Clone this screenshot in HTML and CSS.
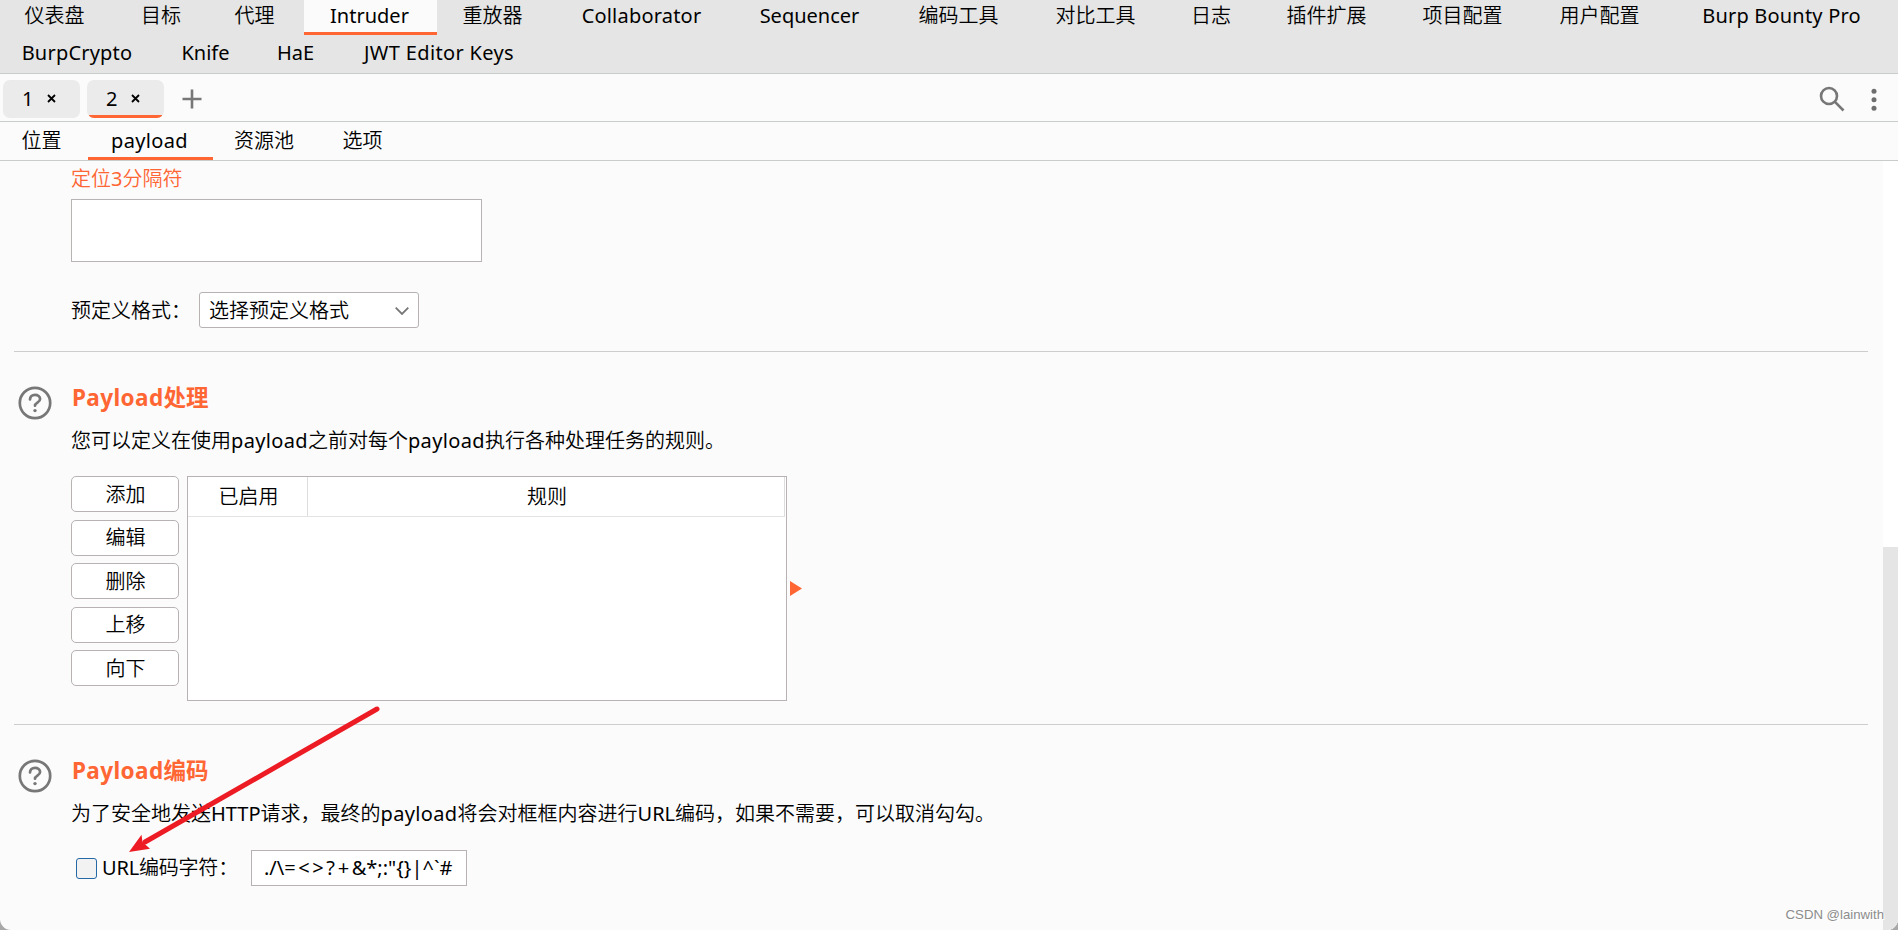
FILE: index.html
```html
<!DOCTYPE html>
<html lang="zh-CN">
<head>
<meta charset="utf-8">
<title>Burp Suite Intruder</title>
<link rel="stylesheet" href="styles.css">
</head>
<body>
<div class="window">
  <header class="tools">
    <nav class="tools-row tools-main">
      <span>仪表盘</span><span>目标</span><span class="before-active">代理</span><span class="active latin">Intruder</span><span>重放器</span><span class="latin spread">Collaborator</span><span class="latin">Sequencer</span><span>编码工具</span><span>对比工具</span><span>日志</span><span>插件扩展</span><span>项目配置</span><span>用户配置</span><span class="latin spread">Burp Bounty Pro</span>
    </nav>
    <nav class="tools-row tools-extra">
      <span class="latin spread">BurpCrypto</span><span class="latin">Knife</span><span class="latin">HaE</span><span class="latin spread-wide">JWT Editor Keys</span>
    </nav>
  </header>

  <div class="attacks">
    <div class="attack"><span class="latin">1</span><svg class="close" viewBox="0 0 9 9"><path d="M1 1l7 7M8 1l-7 7"/></svg></div>
    <div class="attack selected"><span class="latin">2</span><svg class="close" viewBox="0 0 9 9"><path d="M1 1l7 7M8 1l-7 7"/></svg></div>
    <svg class="plus" viewBox="0 0 20 20"><path d="M10 .5v19M.5 10h19"/></svg>
    <svg class="search" viewBox="0 0 26 26"><circle cx="10" cy="10" r="8"/><path d="M15.7 15.7L24.5 24.5"/></svg>
    <svg class="more" viewBox="0 0 6 24"><circle cx="3" cy="3.2" r="2.5"/><circle cx="3" cy="11.7" r="2.5"/><circle cx="3" cy="20.2" r="2.5"/></svg>
  </div>

  <nav class="subtabs">
    <span>位置</span><span class="active latin spread-wide">payload</span><span>资源池</span><span>选项</span>
  </nav>

  <div class="body">
    <main class="content">
      <section class="positions">
        <div class="label-accent">定位<span class="latin">3</span>分隔符</div>
        <div class="textarea"></div>
        <div class="format">
          <span class="format-label">预定义格式：</span>
          <div class="select"><span>选择预定义格式</span><svg viewBox="0 0 14 8"><path d="M.7.7L7 7 13.3.7"/></svg></div>
        </div>
      </section>

      <section class="section processing">
        <svg class="help" viewBox="0 0 34 34"><circle cx="17" cy="17" r="15.2"/><path d="M12 13.500c0-3 2.200-4.700 5-4.700s5.100 1.700 5.100 4.300c0 3.500-5.100 3.500-5.100 6.600"/><circle class="dot" cx="17" cy="24.600" r="1.700"/></svg>
        <div class="section-body">
          <h2><span class="title-latin">Payload</span>处理</h2>
          <p>您可以定义在使用<span class="latin spread-wide">payload</span>之前对每个<span class="latin spread-wide">payload</span>执行各种处理任务的规则。</p>
          <div class="rules">
            <div class="buttons"><button>添加</button><button>编辑</button><button>删除</button><button>上移</button><button>向下</button></div>
            <div class="table"><div class="thead"><span>已启用</span><span>规则</span></div></div>
            <svg class="expand" viewBox="0 0 12 15"><path d="M0 0L12 7.500 0 15z"/></svg>
          </div>
        </div>
      </section>

      <section class="section encoding">
        <svg class="help" viewBox="0 0 34 34"><circle cx="17" cy="17" r="15.2"/><path d="M12 13.500c0-3 2.200-4.700 5-4.700s5.100 1.700 5.100 4.300c0 3.500-5.100 3.500-5.100 6.600"/><circle class="dot" cx="17" cy="24.600" r="1.700"/></svg>
        <div class="section-body">
          <h2><span class="title-latin">Payload</span>编码</h2>
          <p>为了安全地发送<span class="latin">HTTP</span>请求，最终的<span class="latin spread-wide">payload</span>将会对框框内容进行<span class="latin">URL</span>编码，如果不需要，可以取消勾勾。</p>
          <div class="encode">
            <span class="checkbox"></span>
            <span class="encode-label"><span class="latin">URL</span>编码字符：</span>
            <div class="chars latin">./\<span class="spaced">=&lt;&gt;?+</span>&amp;*;:"{}|^`#</div>
          </div>
        </div>
      </section>
    </main>
    <div class="scrollbar"><div class="thumb"></div></div>
  </div>

  <svg class="arrow" viewBox="0 0 260 156"><path class="shaft" d="M252 9L20 142"/><path d="M4 152L16.500 134.800 17.500 142 25 148.800z"/></svg>
  <div class="watermark">CSDN @lainwith</div>
</div>
</body>
</html>
```
FILE: styles.css
```css
* { box-sizing: border-box; }
body {
  margin: 0;
  background: #a8a8a8;
  color: #000;
  font: 350 20px/28px "Noto Sans", "Noto Sans CJK SC", sans-serif;
}
.window {
  position: relative;
  display: flex;
  flex-direction: column;
  width: 1898px;
  height: 930px;
  overflow: hidden;
  background: #fbfbfb;
  border-radius: 0 0 11px 11px;
  white-space: nowrap;
}
.latin { font-weight: 400; }
.spread { letter-spacing: .2px; }
.spread-wide { letter-spacing: .350px; }
.tools { height: 74px; background: #e5e5e5; border-bottom: 1px solid #c8cdcc; }
.tools-row { display: grid; text-align: center; }
.tools-row span { padding-top: 2px; }
.tools-main {
  height: 36px;
  grid-template-columns: 109px 104px 91px 133px 111px 187px 149px 149px 125px 106px 125px 147px 127px 237px;
}
.tools-main .before-active { padding-right: 8px; }
.tools-main .active { height: 35px; padding-right: 2px; background: #fbfbfb; border-bottom: 3px solid #ff6633; }
.tools-extra { grid-template-columns: 154px 103px 77px 210px; padding-top: 1px; }

.attacks {
  display: flex;
  align-items: flex-start;
  height: 48px;
  padding: 6px 21px 0 3px;
  border-bottom: 1px solid #c8cdcc;
}
.attack {
  display: flex;
  align-items: center;
  gap: 14px;
  width: 77px;
  height: 38px;
  margin-right: 7px;
  padding: 0 0 1px 19px;
  border-radius: 7px;
  background: #ebebeb;
  overflow: hidden;
}
.attack.selected { position: relative; }
.attack.selected::after {
  content: "";
  position: absolute;
  left: 2px;
  right: 2px;
  bottom: 0;
  height: 3px;
  border-radius: 0 0 5px 5px;
  background: #ff6633;
}
.close { width: 9px; height: 9px; fill: none; stroke: #000; stroke-width: 1.800; }
.plus { width: 20px; height: 20px; margin: 9px 0 0 11px; fill: none; stroke: #777; stroke-width: 2.600; }
.search { width: 26px; height: 26px; margin: 6px 26px 0 auto; fill: none; stroke: #777; stroke-width: 2.600; }
.more { width: 6px; height: 24px; margin-top: 8px; fill: #6e6e6e; }

.subtabs {
  display: grid;
  grid-template-columns: 88px 125px 102px 95px;
  height: 39px;
  border-bottom: 1px solid #c8cdcc;
  text-align: center;
}
.subtabs span { height: 38px; padding-top: 5px; }
.subtabs span:first-child { padding-right: 5px; }
.subtabs .active { padding-right: 2px; border-bottom: 3px solid #ff6633; }

.body { display: flex; flex: 1; min-height: 0; }
.content { width: 1883px; padding: 0 15px 0 14px; }
.positions { height: 190px; padding: 3px 0 0 57px; }
.label-accent { color: #ff6633; line-height: 30px; }
.textarea { width: 411px; height: 63px; margin-top: 5px; background: #fff; border: 1px solid #b8b4b4; }
.format { display: flex; align-items: center; height: 36px; margin-top: 30px; }
.format-label { width: 128px; padding-top: 1px; }
.select {
  display: flex;
  align-items: center;
  justify-content: space-between;
  width: 220px;
  height: 36px;
  padding: 1px 9px 0;
  background: #fff;
  border: 1px solid #b8b2b2;
  border-radius: 3px;
}
.select svg { width: 14px; height: 8px; fill: none; stroke: #777; stroke-width: 1.800; }
.section { display: flex; border-top: 1px solid #cdcdcd; padding-top: 31px; }
.help { flex: none; width: 34px; height: 34px; margin: 3px 19px 0 4px; fill: none; stroke: #777; stroke-width: 2.700; stroke-linecap: round; }
.help .dot { fill: #777; stroke: none; }
h2 { margin: 0; padding-left: 1px; color: #ff6633; font-size: 22.500px; line-height: 30px; font-weight: 700; }
.title-latin { letter-spacing: .400px; }
p { margin: 14px 0 0; line-height: 28px; }
.rules { display: flex; margin-top: 21px; }
.buttons { display: flex; flex-direction: column; gap: 7.500px; width: 108px; margin-right: 8px; }
button {
  width: 108px;
  height: 36px;
  padding: 1px 0 0 1px;
  background: #fff;
  border: 1px solid #b8b2b2;
  border-radius: 5px;
  color: #000;
  font: inherit;
}
.table { width: 600px; height: 225px; padding-right: 1px; background: #fff; border: 1px solid #b8b2b2; }
.thead { display: flex; height: 40px; border-right: 1px solid #ddd; border-bottom: 1px solid #e3e3e3; text-align: center; line-height: 40px; }
.thead span:first-child { width: 120px; padding-left: 2px; border-right: 1px solid #ddd; }
.thead span:last-child { flex: 1; padding-left: 2px; }
.expand { width: 12px; height: 15px; margin: 105px 0 0 3px; fill: #ff6633; }
.processing { height: 373px; }
.encode { display: flex; align-items: center; height: 36px; margin-top: 22px; }
.checkbox { width: 21px; height: 21px; margin: 0 5px; background: #f2f2f2; border: 1.500px solid #2469a6; border-radius: 3px; }
.encode-label { width: 149px; letter-spacing: -.200px; }
.chars { width: 216px; height: 36px; padding: 3px 0 0 12px; background: #fff; border: 1px solid #b8b2b2; }
.spaced { letter-spacing: 2.600px; }
.scrollbar { width: 15px; padding-top: 386px; background: #fff; }
.thumb { height: 100%; background: #e5e5e5; }

.arrow { position: absolute; left: 125px; top: 700px; width: 260px; height: 156px; fill: #ed1c24; }
.shaft { stroke: #ed1c24; stroke-width: 5; stroke-linecap: round; }
.watermark {
  position: absolute;
  right: 14px;
  bottom: 5px;
  color: #8c8c8c;
  font: 13.200px/20px "Liberation Sans", sans-serif;
  text-shadow: 1px 1px 0 #fff;
}
```
